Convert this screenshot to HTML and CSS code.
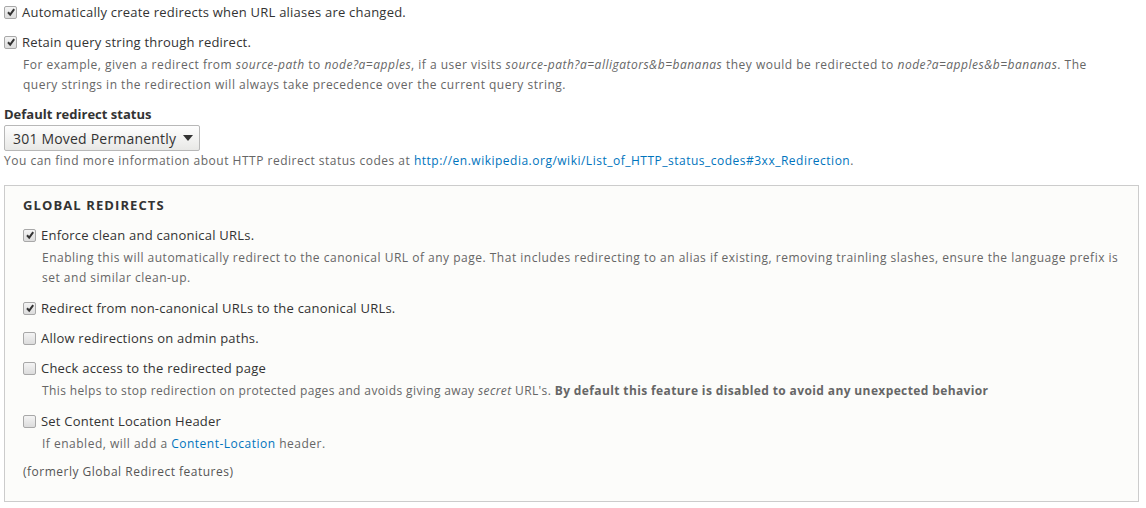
FILE: index.html
```html
<!DOCTYPE html>
<html>
<head>
<meta charset="utf-8">
<link rel="stylesheet" href="styles.css">
</head>
<body>
<form class="form">
  <div class="item">
    <label class="check"><span class="box on"><svg viewBox="0 0 10 10"><path d="M2 5.2 L4.2 7.6 L8.2 2.2" /></svg></span>Automatically create redirects when URL aliases are changed.</label>
  </div>
  <div class="item">
    <label class="check"><span class="box on"><svg viewBox="0 0 10 10"><path d="M2 5.2 L4.2 7.6 L8.2 2.2" /></svg></span>Retain query string through redirect.</label>
    <div class="desc desc-first">For example, given a redirect from <em>source-path</em> to <em>node?a=apples</em>, if a user visits <em>source-path?a=alligators&amp;b=bananas</em> they would be redirected to <em>node?a=apples&amp;b=bananas</em>. The query strings in the redirection will always take precedence over the current query string.</div>
  </div>
  <div class="item select-item">
    <div class="label-bold">Default redirect status</div>
    <div class="select"><span>301 Moved Permanently</span><span class="caret"></span></div>
    <div class="help">You can find more information about HTTP redirect status codes at <a href="#">http://en.wikipedia.org/wiki/List_of_HTTP_status_codes#3xx_Redirection</a>.</div>
  </div>
  <fieldset class="group">
    <div class="legend">GLOBAL REDIRECTS</div>
    <div class="item">
      <label class="check"><span class="box on"><svg viewBox="0 0 10 10"><path d="M2 5.2 L4.2 7.6 L8.2 2.2" /></svg></span>Enforce clean and canonical URLs.</label>
      <div class="desc">Enabling this will automatically redirect to the canonical URL of any page. That includes redirecting to an alias if existing, removing trainling slashes, ensure the language prefix is set and similar clean-up.</div>
    </div>
    <div class="item">
      <label class="check"><span class="box on"><svg viewBox="0 0 10 10"><path d="M2 5.2 L4.2 7.6 L8.2 2.2" /></svg></span>Redirect from non-canonical URLs to the canonical URLs.</label>
    </div>
    <div class="item">
      <label class="check"><span class="box"></span>Allow redirections on admin paths.</label>
    </div>
    <div class="item">
      <label class="check"><span class="box"></span>Check access to the redirected page</label>
      <div class="desc desc-tight">This helps to stop redirection on protected pages and avoids giving away <em>secret</em> URL's. <strong>By default this feature is disabled to avoid any unexpected behavior</strong></div>
    </div>
    <div class="item">
      <label class="check"><span class="box"></span>Set Content Location Header</label>
      <div class="desc">If enabled, will add a <a href="#">Content-Location</a> header.</div>
    </div>
    <div class="note">(formerly Global Redirect features)</div>
  </fieldset>
</form>
</body>
</html>
```

FILE: styles.css
```css
html, body {
  margin: 0;
  padding: 0;
  background: #ffffff;
}
body {
  font-family: "Open Sans", "DejaVu Sans", sans-serif;
  font-size: 13px;
  color: #333333;
}
.form {
  padding: 2px 7px 0 4px;
}
.item {
  margin-bottom: 10px;
}
.check {
  display: flex;
  align-items: center;
  line-height: 20px;
  height: 20px;
  letter-spacing: 0.22px;
}
.box {
  width: 11px;
  height: 11px;
  border: 1px solid #a8a8a8;
  border-radius: 2px;
  background: linear-gradient(#f4f4f4, #dcdcdc);
  margin-right: 5px;
  display: inline-flex;
  align-items: center;
  justify-content: center;
  flex: none;
}
.box svg {
  width: 10px;
  height: 10px;
}
.box svg path {
  fill: none;
  stroke: #333;
  stroke-width: 2;
}
.desc {
  margin: 3px 0 0 19px;
  font-size: 12px;
  line-height: 20px;
  color: #666666;
  letter-spacing: 0.5px;
}
.desc-first {
  max-width: 1092px;
}
.desc-tight {
  letter-spacing: 0.38px;
}
.label-bold {
  font-weight: bold;
  line-height: 20px;
  margin-top: -1px;
}
.select {
  margin-top: 1px;
  width: 196px;
  height: 26px;
  border: 1px solid #b8b8b8;
  border-radius: 2px;
  background: linear-gradient(#fefefe, #e8e8e6);
  display: flex;
  align-items: center;
  justify-content: space-between;
  padding: 0 6px 0 8px;
  box-sizing: border-box;
  font-size: 14px;
  letter-spacing: 0.2px;
  color: #333;
}
.caret {
  width: 0;
  height: 0;
  border-left: 5px solid transparent;
  border-right: 5px solid transparent;
  border-top: 6px solid #333;
}
.help {
  margin-top: 0;
  font-size: 12px;
  line-height: 20px;
  color: #666666;
  letter-spacing: 0.5px;
}
.select-item {
  margin-bottom: 14px;
}
a {
  color: #0074bd;
  text-decoration: none;
}
.group {
  margin: 0;
  border: 1px solid #cccccc;
  background: #fcfcfa;
  padding: 9px 18px 19px 18px;
  min-width: 0;
}
.legend {
  font-weight: bold;
  letter-spacing: 1.1px;
  line-height: 20px;
  margin-bottom: 10px;
}
.note {
  font-size: 12px;
  line-height: 20px;
  color: #555;
  margin-top: -2px;
  letter-spacing: 0.5px;
}
```
